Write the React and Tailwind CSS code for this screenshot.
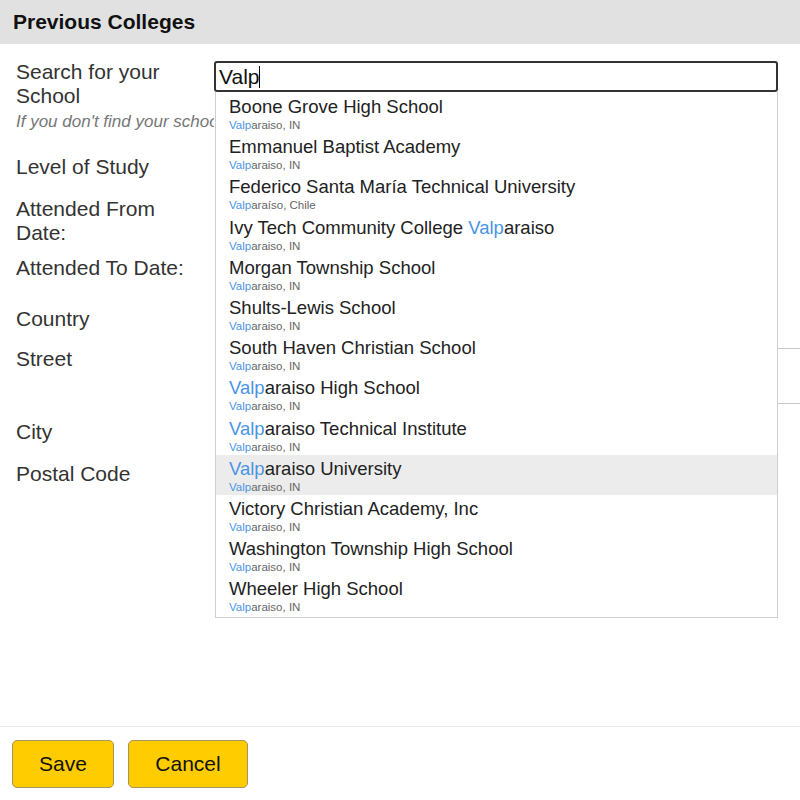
const schools = [
  { name: "Boone Grove High School", place: "Valparaiso, IN" },
  { name: "Emmanuel Baptist Academy", place: "Valparaiso, IN" },
  { name: "Federico Santa María Technical University", place: "Valparaíso, Chile" },
  { name: "Ivy Tech Community College Valparaiso", place: "Valparaiso, IN" },
  { name: "Morgan Township School", place: "Valparaiso, IN" },
  { name: "Shults-Lewis School", place: "Valparaiso, IN" },
  { name: "South Haven Christian School", place: "Valparaiso, IN" },
  { name: "Valparaiso High School", place: "Valparaiso, IN" },
  { name: "Valparaiso Technical Institute", place: "Valparaiso, IN" },
  { name: "Valparaiso University", place: "Valparaiso, IN" },
  { name: "Victory Christian Academy, Inc", place: "Valparaiso, IN" },
  { name: "Washington Township High School", place: "Valparaiso, IN" },
  { name: "Wheeler High School", place: "Valparaiso, IN" },
];

const query = "Valp";

// mark the typed part in blue where it shows up
function Highlight({ text }) {
  const i = text.toLowerCase().indexOf(query.toLowerCase());
  if (i < 0) return text;
  return (
    <>
      {text.slice(0, i)}
      <span className="text-[#4a94e4]">{text.slice(i, i + query.length)}</span>
      {text.slice(i + query.length)}
    </>
  );
}

function Row({ h, children, label }) {
  return (
    <div className={`flex ${h}`}>
      <div className="w-[198px] shrink-0 overflow-hidden text-[21px] leading-[24px] text-[#333]">{label}</div>
      <div className="flex-1">{children}</div>
    </div>
  );
}

export default function App() {
  return (
    <div className="w-[800px] h-[800px] overflow-hidden flex flex-col bg-white font-['Liberation_Sans',Arial,sans-serif]">
      <div className="h-[44px] shrink-0 bg-[#e1e1e1] flex items-center px-[13px]">
        <h1 className="text-[21px] font-bold text-[#111]">Previous Colleges</h1>
      </div>

      <div className="flex-1 pt-[16px] pl-[16px]">
        <Row
          h="h-[95px]"
          label={
            <>
              <div>Search for your</div>
              <div>School</div>
              <div className="mt-[2px] text-[17px] italic text-[#777] whitespace-nowrap">If you don't find your school, enter it manually</div>
            </>
          }
        >
          <div className="relative z-10 w-[564px] bg-white">
            <div className="h-[31px] mt-[1px] border-2 border-[#333] rounded-[3px] flex items-center px-[3px] text-[21px] text-[#111]">
              Valp<span className="inline-block w-px h-[22px] bg-black" />
            </div>
            <div className="absolute left-[1px] right-0 top-full border border-[#cfcfcf] border-t-0 bg-white pt-[1px] pb-[2px]">
              {schools.map((s) => (
                <div
                  key={s.name}
                  className={`h-[40.2px] pl-[13px] pt-[4px] ${s.name === "Valparaiso University" ? "bg-[#ececec]" : ""}`}
                >
                  <div className="text-[18.5px] leading-[20px] text-[#222] whitespace-nowrap">
                    <Highlight text={s.name} />
                  </div>
                  <div className="text-[11.5px] leading-[14px] mt-[1px] text-[#666]">
                    <Highlight text={s.place} />
                  </div>
                </div>
              ))}
            </div>
          </div>
        </Row>

        <Row h="h-[42px]" label="Level of Study">
          <div className="ml-[6px] h-[30px] w-[550px] border border-[#ccc]" />
        </Row>
        <Row
          h="h-[59px]"
          label={
            <>
              <div>Attended From</div>
              <div>Date:</div>
            </>
          }
        >
          <div className="ml-[6px] h-[30px] w-[550px] border border-[#ccc]" />
        </Row>
        <Row h="h-[51px]" label="Attended To Date:">
          <div className="ml-[6px] h-[30px] w-[550px] border border-[#ccc]" />
        </Row>
        <Row h="h-[40px]" label="Country">
          <div className="ml-[6px] h-[30px] w-[550px] border border-[#ccc]" />
        </Row>
        <Row h="h-[73px]" label="Street">
          <div className="ml-[6px] mt-px h-[56px] w-[640px] border border-[#c8c8c8]" />
        </Row>
        <Row h="h-[42px]" label="City">
          <div className="ml-[6px] h-[30px] w-[550px] border border-[#ccc]" />
        </Row>
        <Row h="h-[42px]" label="Postal Code">
          <div className="ml-[6px] h-[30px] w-[550px] border border-[#ccc]" />
        </Row>
      </div>

      <div className="h-[74px] shrink-0 border-t border-[#e6e6e6] flex gap-[14px] pl-[12px] pt-[13px]">
        <button className="w-[102px] h-[48px] bg-[#ffcc00] border border-[#a8935a] rounded-[5px] text-[21px] text-[#111]">
          Save
        </button>
        <button className="w-[120px] h-[48px] bg-[#ffcc00] border border-[#a8935a] rounded-[5px] text-[21px] text-[#111]">
          Cancel
        </button>
      </div>
    </div>
  );
}
